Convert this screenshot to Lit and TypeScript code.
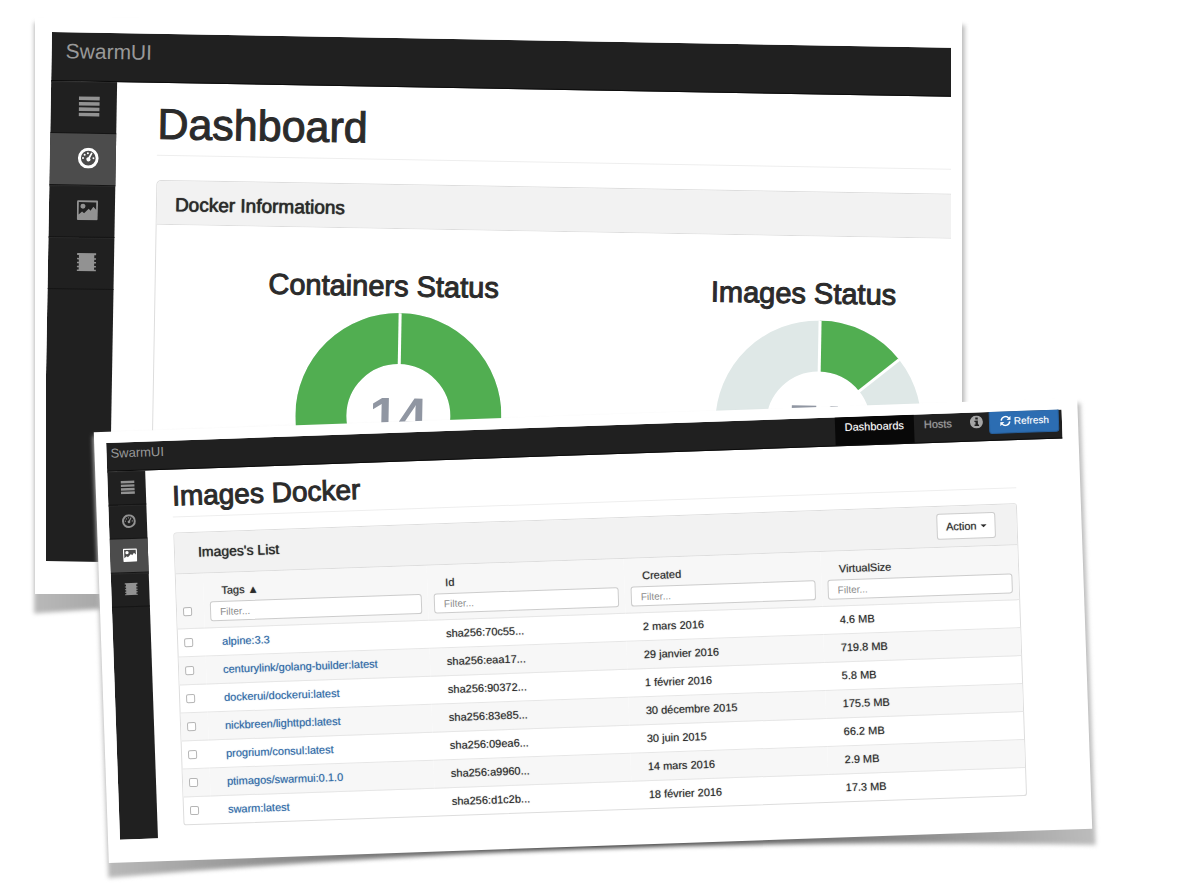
import { LitElement, html, svg, css } from "lit";
import { customElement, property } from "lit/decorators.js";

const glyphs: Record<string, unknown> = {
  list: svg`<path d="M0 1h21v3.6H0zM0 6.4h21V10H0zM0 11.8h21v3.6H0zM0 17.2h21v3.6H0z" fill="currentColor"/>`,
  dashboard: svg`<circle cx="10.5" cy="10.5" r="8.9" fill="none" stroke="currentColor" stroke-width="3"/>
    <g fill="currentColor"><circle cx="5.2" cy="10.4" r="1"/><circle cx="6.800" cy="7.100" r="1"/><circle cx="10" cy="5.5" r="1"/>
    <circle cx="15.600" cy="10.4" r="1"/><path d="M13.4 4.8l1.3.7-2.500 5a2 2 0 1 1-1.7-.8z"/></g>`,
  picture: svg`<path fill="currentColor" fill-rule="evenodd" d="M1 .8h19a1 1 0 0 1 1 1v17.6a1 1 0 0 1-1 1H1a1 1 0 0 1-1-1V1.800a1 1 0 0 1 1-1zM1.800 2.600v12.400l3.400-3 2 1.600 4.600-4.600 1.800 2 2.800-4L19.200 10V2.600z"/>
    <circle cx="6" cy="6.600" r="2.500" fill="currentColor"/>`,
  film: svg`<path fill="currentColor" d="M1 1.500h19v2h-1.800v2.900H20v1.500h-1.800v2.400H20v1.500h-1.800v2.400H20v1.500h-1.800v2.300H20v1.500H1V18h1.800v-2.300H1v-1.500h1.800v-2.400H1v-1.500h1.800V7.900H1V6.400h1.800V3.500H1z"/>`,
  info: svg`<circle cx="10.500" cy="10.500" r="10.500" fill="currentColor"/>
    <path d="M8.800 3.200h4v3.200h-4zM7.200 8.200h5.600v6.300h1.700V17H7.200v-2.500h1.700v-3.900H7.200z" fill="#202020"/>`,
  refresh: svg`<g fill="none" stroke="currentColor" stroke-width="2.800"><path d="M2.400 9.500A8.200 8.200 0 0 1 16.800 5"/><path d="M18.600 11.500A8.200 8.200 0 0 1 4.200 16"/></g>
    <path fill="currentColor" d="M20.500.8v7.700h-7.700zM.5 20.200v-7.700h7.700z"/>`,
};

const icon = (name: string) =>
  html`<svg class="icon" viewBox="0 0 21 21" aria-hidden="true">${glyphs[name]}</svg>`;

const entries = [
  { id: "list", label: "Containers" },
  { id: "dashboard", label: "Dashboard" },
  { id: "picture", label: "Images" },
  { id: "film", label: "Events" },
];

@customElement("side-nav")
class SideNav extends LitElement {
  @property() current = "";
  static styles = css`
    :host { display: block; background: #202020; }
    nav { display: flex; flex-direction: column; }
    a {
      box-sizing: border-box;
      height: var(--item, 52px);
      padding: var(--pad, 14px 0 0 28px);
      border-bottom: 1px solid #151515;
      box-shadow: inset 0 1px #292929;
      color: #929292;
    }
    a.active { background: #4c4c4c; color: #fff; box-shadow: none; }
    .icon { display: block; width: var(--glyph, 21px); height: var(--glyph, 21px); }
  `;
  render() {
    return html`<nav>
      ${entries.map(
        (e) => html`<a href="#${e.id}" aria-label=${e.label} class=${e.id === this.current ? "active" : ""}>${icon(e.id)}</a>`
      )}
    </nav>`;
  }
}

@customElement("status-donut")
class StatusDonut extends LitElement {
  @property({ type: Number }) total = 0;
  @property({ type: Number }) used = 0;
  static styles = css`
    :host { display: block; }
    svg { display: block; width: 206px; height: 206px; }
    circle { fill: none; stroke-width: 51px; }
    .rest { stroke: #dfe8e7; }
    .used { stroke: #51ae51; }
    line { stroke: #fff; stroke-width: 3px; }
    text { font: bold 52px "Liberation Sans", Arial, sans-serif; fill: #9096a2; text-anchor: middle; }
  `;
  render() {
    const share = (this.used / this.total) * 100;
    return html`<svg viewBox="0 0 206 206">
      <circle class="rest" cx="103" cy="103" r="77.500" />
      <circle class="used" cx="103" cy="103" r="77.500" pathLength="100"
        stroke-dasharray="${share} ${100 - share}" transform="rotate(-90 103 103)" />
      <line x1="103" y1="0" x2="103" y2="54" />
      ${share < 100
        ? svg`<line x1="103" y1="0" x2="103" y2="54" transform="rotate(${share * 3.6} 103 103)" />`
        : null}
      <text x="103" y="121">${this.total}</text>
    </svg>`;
  }
}

const curl = (id: string) => html`<svg class="curl" viewBox="0 0 1000 500" preserveAspectRatio="none" aria-hidden="true">
  <defs>
    <linearGradient id=${id}>
      <stop offset="0" stop-color="#b9b9b9" /><stop offset="0.250" stop-color="#7c7c7c" />
      <stop offset="0.500" stop-color="#3c3c3c" /><stop offset="0.750" stop-color="#7c7c7c" />
      <stop offset="1" stop-color="#bdbdbd" />
    </linearGradient>
  </defs>
  <path d="M-1 4V517Q500 488 1003 519V6Z" fill="url(#${id})" />
</svg>`;

const images = [
  ["alpine:3.3", "sha256:70c55...", "2 mars 2016", "4.6 MB"],
  ["centurylink/golang-builder:latest", "sha256:eaa17...", "29 janvier 2016", "719.8 MB"],
  ["dockerui/dockerui:latest", "sha256:90372...", "1 février 2016", "5.8 MB"],
  ["nickbreen/lighttpd:latest", "sha256:83e85...", "30 décembre 2015", "175.5 MB"],
  ["progrium/consul:latest", "sha256:09ea6...", "30 juin 2015", "66.2 MB"],
  ["ptimagos/swarmui:0.1.0", "sha256:a9960...", "14 mars 2016", "2.9 MB"],
  ["swarm:latest", "sha256:d1c2b...", "18 février 2016", "17.3 MB"],
];
const columns = ["Tags", "Id", "Created", "VirtualSize"];

@customElement("app-root")
class AppRoot extends LitElement {
  static styles = css`
    :host {
      display: block;
      min-height: 100vh;
      box-sizing: border-box;
      padding: 18px 0 49px;
      overflow: hidden;
      background: #fff;
      color: #2b2b2b;
      font-family: "Liberation Sans", Arial, sans-serif;
    }
    * { box-sizing: border-box; }
    h1, h2, h3 { margin: 0; text-shadow: 0 0 1px currentColor; font-weight: normal; }
    h1 { border-bottom: 1px solid #eee; -webkit-text-stroke: 1px currentColor; text-shadow: none; }
    a { text-decoration: none; }
    .icon { display: block; flex: none; }

    .sheet { position: relative; }
    .curl { position: absolute; inset: 0; width: 100%; height: 100%; overflow: visible; filter: blur(2px); }
    .paper { position: relative; background: #fff; }
    .clip { overflow: hidden; }
    .navbar { display: flex; background: #202020; border-bottom: 1px solid #0c0c0c; color: #999; }
    .brand { margin-right: auto; color: #999; }
    .body { display: flex; }
    .panel { border: 1px solid #ddd; }
    .panel-head { display: flex; align-items: center; background: #f2f2f2; border-bottom: 1px solid #ddd; }

    .back { margin: 0 226px 0 35px; }
    .back .paper { padding: 14px 11px 15px; }
    .back .clip { padding-bottom: 18px; }
    .back .screen {
      width: calc(100% + 121px);
      height: 529px;
      margin-left: 6px;
      overflow: hidden;
      transform: rotate(1deg);
      transform-origin: 0 0;
    }
    .back .navbar { height: 49px; padding-left: 14px; }
    .back .brand { font-size: 21px; line-height: 37px; }
    .back side-nav { width: 66px; height: 520px; flex: none; }
    .back main { flex: 1; padding: 18px 41px 0; }
    .back h1 { font-size: 43px; line-height: 46px; padding-bottom: 8px; margin-bottom: 24px; }
    .back .panel { border-radius: 5px 5px 0 0; }
    .back .panel-head { height: 44px; padding-left: 18px; border-radius: 4px 4px 0 0; }
    .back h2 { font-size: 19px; line-height: 22px; padding-top: 4px; -webkit-text-stroke: thin; }
    .charts { display: grid; grid-template-columns: 1fr 1fr; padding: 41px 18px 48px; }
    .chart { display: flex; flex-direction: column; align-items: center; gap: 11px; }
    .chart h3 { font-size: 29px; line-height: 32px; -webkit-text-stroke: 1px currentColor; text-shadow: none; }
    .chart status-donut { padding-left: 34px; }

    .front { margin: -179px 103px 0 101px; transform: rotate(-2deg); }
    .front .paper { padding: 11px 16px 23px 12px; }
    .front .navbar { height: 29px; font-size: 11px; line-height: 14px; }
    .front .brand { font-size: 13px; padding: 4px 0 0 4px; }
    .front .tab { padding: 3px 10px 0; color: #999; }
    .front .tab.active { background: #080808; color: #fff; }
    .about { padding: 3px 6px 0 8px; color: #a5a5a5; }
    .about .icon { width: 13px; height: 13px; }
    .refresh {
      display: flex;
      gap: 3px;
      width: 70px;
      height: 26px;
      margin: -4px 3px 0 0;
      padding: 7px 10px 0;
      border: 1px solid #265f9c;
      border-radius: 3px;
      background: #2c6db2;
      color: #fff;
      font: 10px/12px "Liberation Sans", Arial, sans-serif;
    }
    .refresh .icon { width: 11px; height: 11px; }
    .front side-nav { width: 38px; flex: none; --item: 34px; --glyph: 14px; --pad: 9px 0 0 13px; }
    .front main { flex: 1; min-width: 0; padding: 11px 48px 12px 26px; }
    .front h1 { font-size: 28px; line-height: 31px; padding-bottom: 5px; margin-bottom: 15px; }
    .front .panel { border-radius: 3px; }
    .front .panel-head { height: 41px; padding: 0 21px 0 23px; justify-content: space-between; }
    .front h2 { font-size: 14px; line-height: 16px; padding-bottom: 2px; }
    .action {
      display: flex;
      align-items: center;
      gap: 4px;
      height: 26px;
      padding: 0 8px;
      border: 1px solid #ccc;
      border-radius: 3px;
      background: #fff;
      color: #2b2b2b;
      font: 11px/14px "Liberation Sans", Arial, sans-serif;
    }
    .caret { border: 3px solid transparent; border-top-color: currentColor; border-bottom: 0; }

    table { width: 100%; table-layout: fixed; border-collapse: collapse; font-size: 11px; line-height: 14px; }
    .pick { width: 27px; }
    .tags { width: 224px; }
    th { padding: 10px 6px 6px; background: #f7f7f7; text-align: left; vertical-align: bottom; font-weight: normal; }
    th label { display: block; padding: 0 0 4px 12px; }
    td { padding: 6px 0 7px 17px; border-top: 1px solid #e6e6e6; }
    th, td, .action { text-shadow: 0 0 1px #2b2b2b80; }
    .tab, .refresh { text-shadow: 0 0 1px #ffffff60; }
    tbody tr:nth-child(even) { background: #f7f7f7; }
    td a { color: #2f69a6; text-shadow: 0 0 1px #2f69a680; }
    td.pick, th.pick { padding-left: 6px; }
    td.pick { padding-right: 0; }
    .filter {
      display: block;
      width: 100%;
      height: 20px;
      padding: 1px 9px 0;
      border: 1px solid #ccc;
      border-radius: 3px;
      background: #fff;
      font: 10px/14px "Liberation Sans", Arial, sans-serif;
    }
    .filter::placeholder { color: #8c8c8c; opacity: 1; }
    .tick {
      appearance: none;
      display: block;
      width: 9px;
      height: 9px;
      margin: 0;
      border: 1px solid #b5b5b5;
      border-radius: 2px;
      background: #fff;
    }
    th .tick { margin-bottom: 6px; }
  `;

  render() {
    return html`
      <section class="sheet back">
        ${curl("curl-back")}
        <div class="paper"><div class="clip"><div class="screen">
          <header class="navbar"><a class="brand" href="#home">SwarmUI</a></header>
          <div class="body">
            <side-nav current="dashboard"></side-nav>
            <main>
              <h1>Dashboard</h1>
              <div class="panel">
                <div class="panel-head"><h2>Docker Informations</h2></div>
                <div class="charts">
                  <div class="chart"><h3>Containers Status</h3><status-donut total="14" used="14"></status-donut></div>
                  <div class="chart"><h3>Images Status</h3><status-donut total="71" used="10"></status-donut></div>
                </div>
              </div>
            </main>
          </div>
        </div></div></div>
      </section>

      <section class="sheet front">
        ${curl("curl-front")}
        <div class="paper"><div class="clip">
          <header class="navbar">
            <a class="brand" href="#home">SwarmUI</a>
            <a class="tab active" href="#dashboards">Dashboards</a>
            <a class="tab" href="#hosts">Hosts</a>
            <a class="about" href="#about" aria-label="About">${icon("info")}</a>
            <button class="refresh">${icon("refresh")}Refresh</button>
          </header>
          <div class="body">
            <side-nav current="picture"></side-nav>
            <main>
              <h1>Images Docker</h1>
              <div class="panel">
                <div class="panel-head">
                  <h2>Images's List</h2>
                  <button class="action">Action<span class="caret"></span></button>
                </div>
                <table>
                  <thead><tr>
                    <th class="pick"><input class="tick" type="checkbox" aria-label="Select all" /></th>
                    ${columns.map((c, i) => html`<th class=${i ? "" : "tags"}>
                      <label for="filter-${i}">${c}${i ? "" : " ▲"}</label>
                      <input class="filter" id="filter-${i}" type="text" placeholder="Filter..." />
                    </th>`)}
                  </tr></thead>
                  <tbody>
                    ${images.map(([tag, id, created, size]) => html`<tr>
                      <td class="pick"><input class="tick" type="checkbox" aria-label="Select ${tag}" /></td>
                      <td><a href="#image">${tag}</a></td>
                      <td>${id}</td><td>${created}</td><td>${size}</td>
                    </tr>`)}
                  </tbody>
                </table>
              </div>
            </main>
          </div>
        </div></div>
      </section>
    `;
  }
}
